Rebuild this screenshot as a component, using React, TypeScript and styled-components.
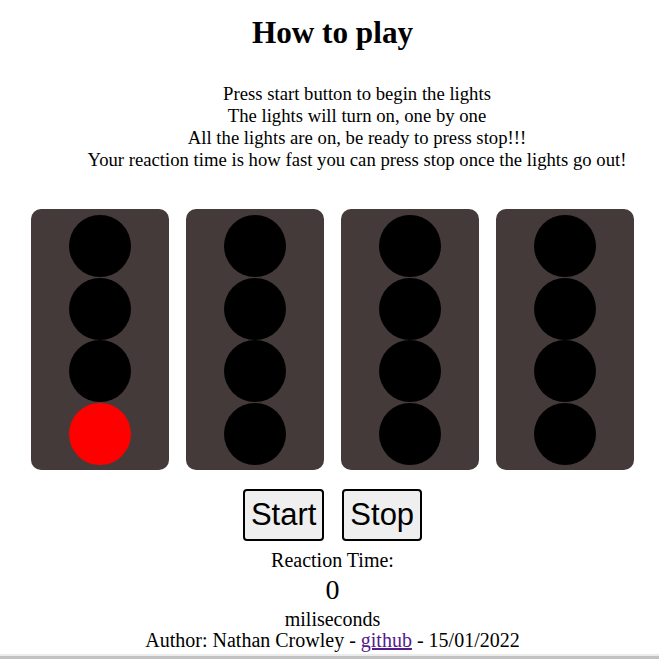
import React from "react";
import styled, { createGlobalStyle } from "styled-components";

const GlobalStyle = createGlobalStyle`
  html, body {
    margin: 0;
    padding: 0;
    background: #ffffff;
    overflow: hidden;
  }
  body {
    font-family: "Liberation Serif", "Times New Roman", serif;
    color: #000;
  }
`;

const Screen = styled.div`
  width: 659px;
  height: 659px;
  display: flex;
  flex-direction: column;
`;

const Page = styled.main`
  flex: 1;
  display: flex;
  flex-direction: column;
  align-items: center;
  padding: 14px 0 0 6px;
`;

const Title = styled.h1`
  margin: 0;
  font-size: 31.2px;
  line-height: 37px;
  font-weight: bold;
  text-align: center;
`;

const Instructions = styled.div`
  align-self: stretch;
  margin-top: 31.6px;
  padding-left: 49px;
  text-align: center;
  font-size: 18.7px;
  line-height: 22px;
`;

const Line = styled.div``;

const Lights = styled.div`
  display: flex;
  gap: 17px;
  margin-top: 38.4px;
`;

const Panel = styled.div`
  width: 138px;
  height: 261px;
  box-sizing: border-box;
  padding: 6px 0 5px;
  background: #453a3a;
  border-radius: 10px;
  display: flex;
  flex-direction: column;
  align-items: center;
  gap: 0.67px;
`;

const Bulb = styled.div<{ $on: boolean }>`
  width: 62px;
  height: 62px;
  border-radius: 50%;
  background: ${(p) => (p.$on ? "#ff0000" : "#000000")};
`;

const Controls = styled.div`
  display: flex;
  gap: 18px;
  margin-top: 19px;
`;

const Button = styled.button`
  font-family: "Liberation Sans", Arial, sans-serif;
  font-size: 31px;
  line-height: 36px;
  padding: 6px 6px;
  border: 2px solid #000;
  border-radius: 4px;
  background: #efefef;
  color: #000;
  cursor: pointer;
`;

const Result = styled.div`
  margin-top: 9.3px;
  display: flex;
  flex-direction: column;
  align-items: center;
  font-size: 20px;
  line-height: 21px;
`;

const Label = styled.div``;

const Time = styled.div`
  font-size: 28px;
  line-height: 38px;
`;

const Credit = styled.div`
  font-size: 20px;
  line-height: 21px;
  text-align: center;
`;

const Link = styled.a`
  color: #551a8b;
  text-decoration: underline;
`;

const BottomBar = styled.div`
  height: 5px;
  border-top: 2px solid #ececec;
  background: #c2c2c2;
  box-sizing: border-box;
`;

const panels = [
  [false, false, false, true],
  [false, false, false, false],
  [false, false, false, false],
  [false, false, false, false],
];

export default function App() {
  return (
    <Screen>
      <GlobalStyle />
      <Page>
        <Title>How to play</Title>
        <Instructions>
          <Line>Press start button to begin the lights</Line>
          <Line>The lights will turn on, one by one</Line>
          <Line>All the lights are on, be ready to press stop!!!</Line>
          <Line>Your reaction time is how fast you can press stop once the lights go out!</Line>
        </Instructions>
        <Lights>
          {panels.map((bulbs, i) => (
            <Panel key={i}>
              {bulbs.map((on, j) => (
                <Bulb key={j} $on={on} />
              ))}
            </Panel>
          ))}
        </Lights>
        <Controls>
          <Button>Start</Button>
          <Button>Stop</Button>
        </Controls>
        <Result>
          <Label>Reaction Time:</Label>
          <Time>0</Time>
          <Label>miliseconds</Label>
          <Credit>
            Author: Nathan Crowley - <Link href="#">github</Link> - 15/01/2022
          </Credit>
        </Result>
      </Page>
      <BottomBar />
    </Screen>
  );
}
